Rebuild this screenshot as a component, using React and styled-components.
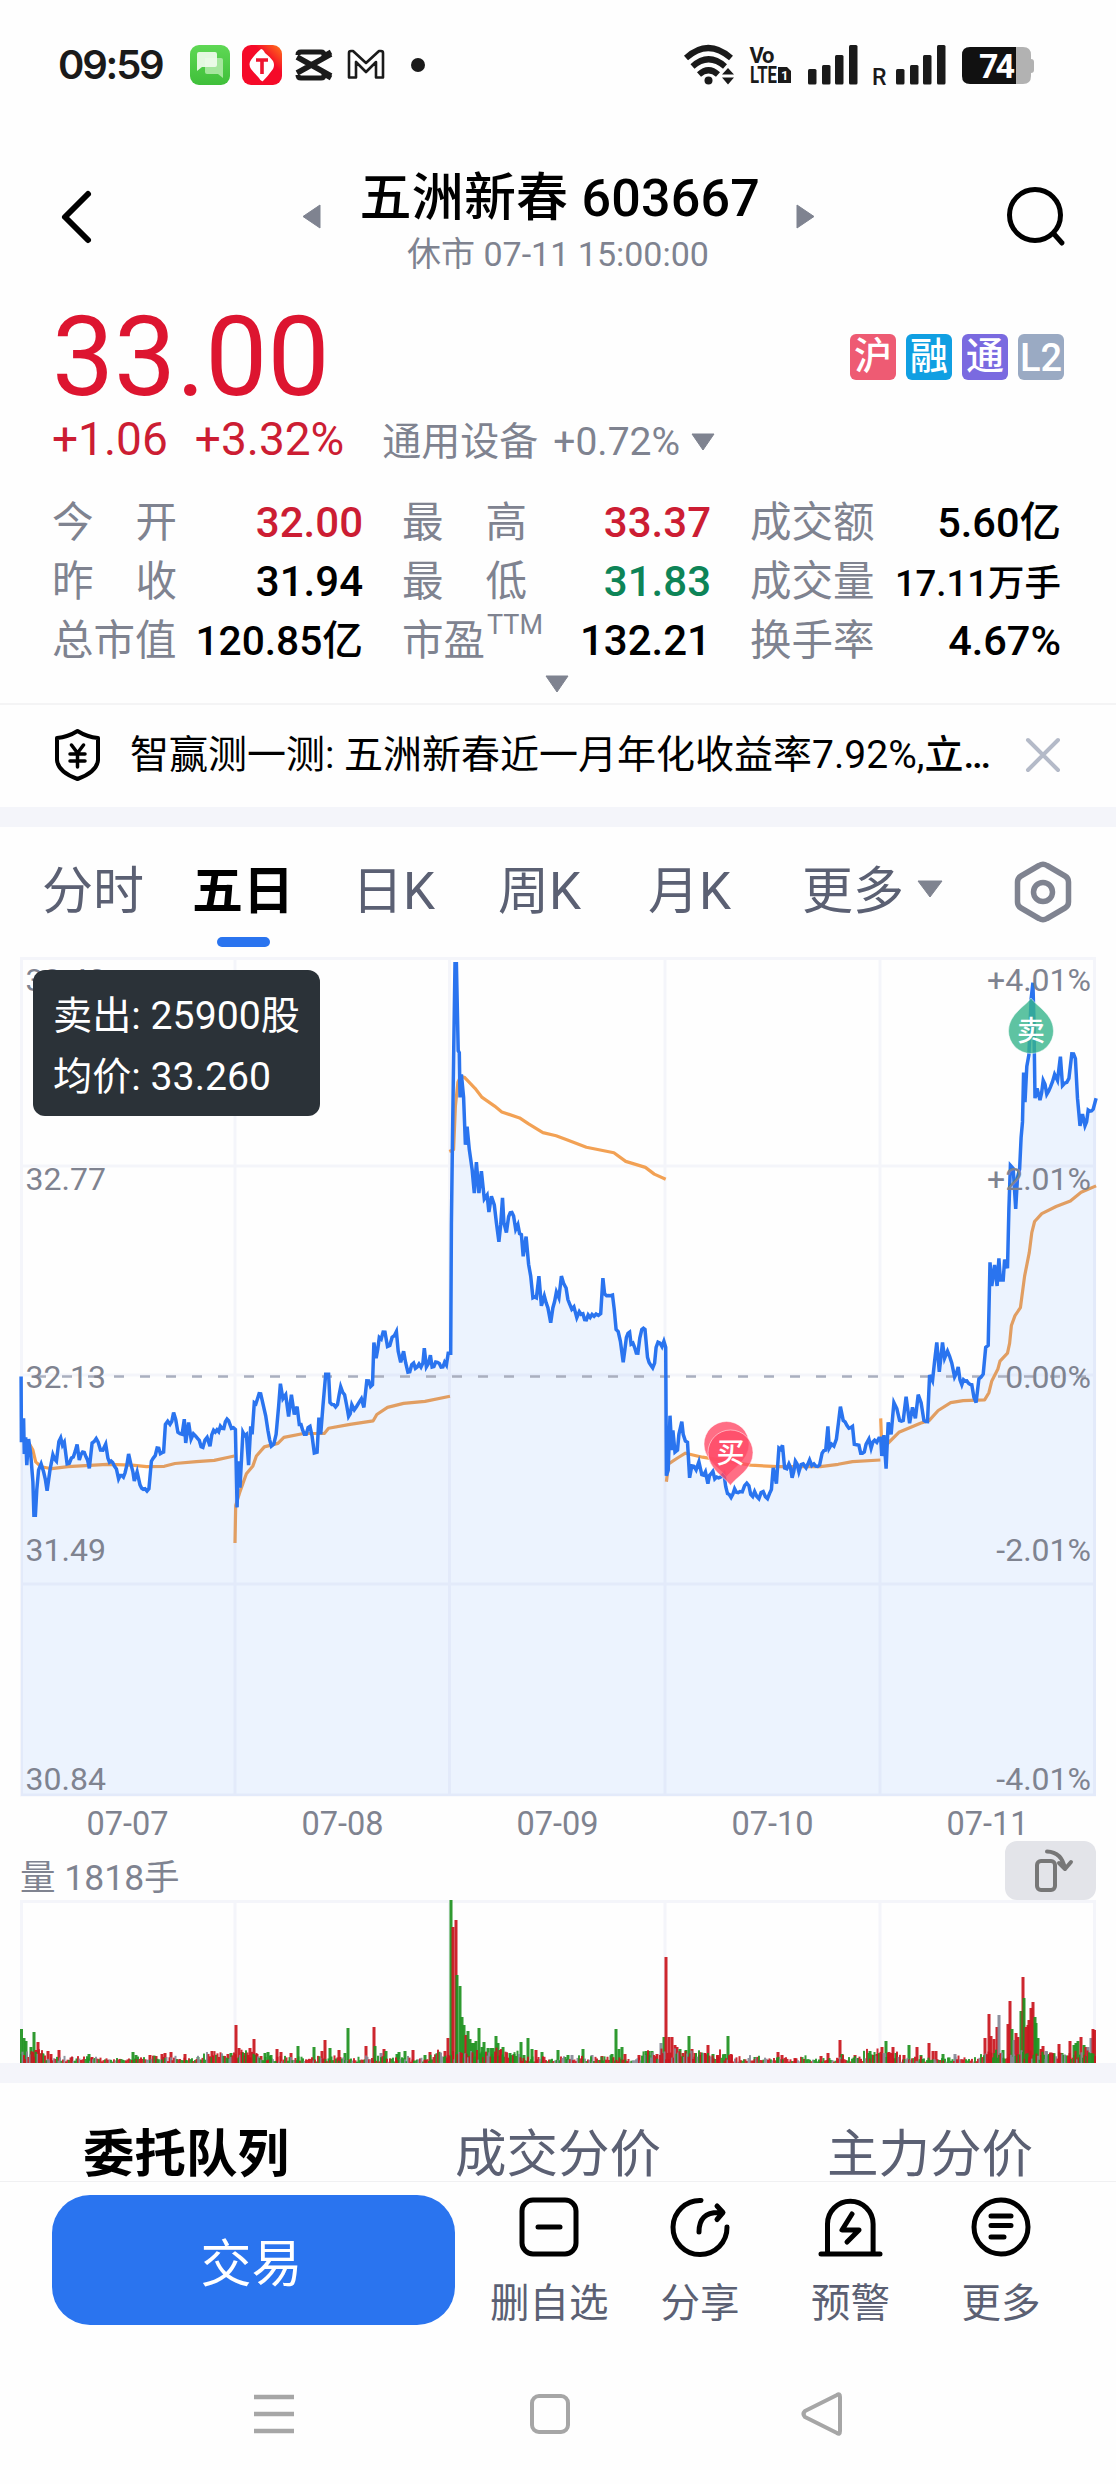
import React from "react";
import styled, { createGlobalStyle } from "styled-components";

const GlobalStyle = createGlobalStyle`
    *{
        box-sizing:border-box;
    }
    body{
        margin:0;
        background:#fefefe;
        color:#000;
        font-family:Roboto, "Noto Sans CJK SC", sans-serif;
    }
    svg{
        overflow:visible;
        flex-shrink:0;
    }
`;

const Page = styled.div`
    width:1116px;
    height:2484px;
    display:flex;
    flex-direction:column;
    overflow:hidden;
`;

const StatusBar = styled.div`
    height:130px;
    padding:0 82px 0 58px;
    display:flex;
    align-items:center;
    justify-content:space-between;
    flex-shrink:0;
    color:#1a1a1a;
`;

const StatusGroup = styled.div`
    display:flex;
    align-items:center;
`;

const Clock = styled.div`
    width:132px;
    font-family:Inter, Roboto, sans-serif;
    font-size:40px;
    font-weight:600;
    line-height:40px;
    letter-spacing:-2.2px;
    white-space:nowrap;
`;

const Header = styled.div`
    height:160px;
    padding:13px 50px 0 59px;
    display:flex;
    align-items:center;
    justify-content:space-between;
    flex-shrink:0;
`;

const Switcher = styled.div`
    margin-left:15px;
    display:flex;
    align-items:center;
    gap:40px;
`;

const TitleBlock = styled.div`
    width:397px;
    text-align:center;
    white-space:nowrap;
    margin-top:10px;
`;

const Title = styled.div`
    font-size:52px;
    font-weight:500;
    line-height:60px;
    letter-spacing:0.2px;
`;

const SubTitle = styled.div`
    font-size:34px;
    line-height:40px;
    margin-top:5px;
    color:#7f8390;
`;

const Quote = styled.div`
    height:413px;
    padding:0 52px;
    display:flex;
    flex-direction:column;
    flex-shrink:0;
`;

const PriceRow = styled.div`
    height:115px;
    display:flex;
    align-items:center;
    justify-content:space-between;
`;

const Price = styled.div`
    font-size:110.5px;
    line-height:110px;
    margin-top:19px;
    color:#dd1530;
`;

const Badges = styled.div`
    display:flex;
    gap:10px;
    margin-top:19px;
`;

const Badge = styled.div`
    width:46px;
    height:46px;
    border-radius:6px;
    background:${props => props.color};
    color:#fff;
    font-size:38px;
    font-weight:500;
    line-height:${props => (props.latin ? 49 : 45)}px;
    text-align:center;
`;

const ChangeRow = styled.div`
    height:68px;
    display:flex;
    align-items:baseline;
    font-size:46px;
    line-height:68px;
    color:#cc1d33;
    white-space:nowrap;
    span + span{
        margin-left:27px;
    }
`;

const Industry = styled.div`
    margin-left:38px;
    display:flex;
    align-items:baseline;
    gap:15px;
    font-size:39px;
    line-height:60px;
    color:#7f8390;
    svg{
        align-self:center;
        margin:0 0 1px -3px;
    }
`;

const Stats = styled.div`
    margin-top:20px;
    display:grid;
    grid-template-columns:311px 309px 311px;
    column-gap:39px;
    grid-auto-rows:59px;
`;

const Stat = styled.div`
    display:flex;
    align-items:baseline;
    justify-content:space-between;
    line-height:59px;
    white-space:nowrap;
`;

const StatLabel = styled.div`
    width:125px;
    display:flex;
    justify-content:${props => (props.spread ? "space-between" : "flex-start")};
    font-size:41.5px;
    color:#7f8390;
    sup{
        font-size:27px;
        line-height:27px;
        position:relative;
        top:-6px;
        left:2px;
    }
`;

const StatValue = styled.div`
    font-size:${props => props.size || 42}px;
    font-weight:500;
    color:${props => props.color || "#000"};
`;

const Expand = styled.div`
    display:flex;
    justify-content:center;
    padding-top:6px;
    margin-left:-2px;
`;

const Banner = styled.div`
    height:104px;
    padding:0 53px 2px 54px;
    display:flex;
    align-items:center;
    border-top:2px solid #f4f4f5;
    flex-shrink:0;
`;

const BannerText = styled.div`
    width:871px;
    margin:0 28px 0 29px;
    font-size:39px;
    line-height:56px;
    white-space:nowrap;
    b{
        font-weight:500;
    }
    i{
        font-style:normal;
        letter-spacing:-2.3px;
    }
`;

const Band = styled.div`
    height:20px;
    background:#f4f5fa;
    flex-shrink:0;
`;

const Tabs = styled.div`
    height:129px;
    padding:27px 42px 0;
    display:flex;
    align-items:flex-start;
    flex-shrink:0;
`;

const Tab = styled.div`
    margin-right:${props => props.gap}px;
    display:flex;
    flex-direction:column;
    align-items:center;
    font-size:51px;
    line-height:76px;
    font-weight:${props => (props.active ? 700 : 400)};
    color:${props => (props.active ? "#000" : "#5b6073")};
    white-space:nowrap;
    &::after{
        content:"";
        width:53px;
        height:10px;
        margin-top:7px;
        border-radius:5px;
        background:${props => (props.active ? "#2a74ef" : "transparent")};
    }
`;

const TabIcon = styled.div`
    display:flex;
    padding-top:${props => props.top}px;
    margin-right:${props => props.gap || 0}px;
`;

const ChartArea = styled.div`
    position:relative;
    height:842px;
    padding:0 20px;
    flex-shrink:0;
    svg{
        display:block;
    }
`;

const Tooltip = styled.div`
    position:absolute;
    left:33px;
    top:14px;
    width:287px;
    height:146px;
    padding:16px 20px 0;
    border-radius:12px;
    background:#2b3238;
    color:#fff;
    font-size:39.2px;
    line-height:61px;
    white-space:nowrap;
`;

const Dates = styled.div`
    height:43px;
    padding:0 20px;
    display:grid;
    grid-template-columns:repeat(5, 215px);
    flex-shrink:0;
    font-size:32.5px;
    line-height:52px;
    text-align:center;
    color:#7f8390;
`;

const VolumeHead = styled.div`
    height:59px;
    padding:0 20px;
    display:flex;
    align-items:center;
    justify-content:space-between;
    flex-shrink:0;
    font-size:35.5px;
    color:#7f8390;
    span{
        padding-top:8px;
    }
`;

const RotateButton = styled.div`
    width:91px;
    height:59px;
    border-radius:12px;
    background:#e3e4e9;
`;

const VolumeChart = styled.div`
    height:163px;
    padding:0 20px;
    flex-shrink:0;
    svg{
        display:block;
    }
`;

const BottomTabs = styled.div`
    height:99px;
    padding-top:34px;
    display:grid;
    grid-template-columns:repeat(3, 372px);
    flex-shrink:0;
    border-bottom:1px solid #f0f0f2;
`;

const BottomTab = styled.div`
    height:64px;
    text-align:center;
    font-size:51.5px;
    line-height:76px;
    font-weight:${props => (props.active ? 700 : 400)};
    color:${props => (props.active ? "#000" : "#5b6073")};
`;

const ActionBar = styled.div`
    height:156px;
    padding:13px 39px 0 52px;
    display:flex;
    align-items:flex-start;
    flex-shrink:0;
`;

const TradeButton = styled.button`
    width:403px;
    height:130px;
    margin-right:19px;
    padding:0 4px 0 0;
    border:none;
    border-radius:38px;
    background:#2a74ef;
    color:#fff;
    font-family:inherit;
    font-size:51px;
`;

const Action = styled.div`
    width:150.6px;
    padding-top:2px;
    display:flex;
    flex-direction:column;
    align-items:center;
    color:#5b6073;
    font-size:39.5px;
    line-height:56px;
    white-space:nowrap;
    svg{
        margin-bottom:19px;
    }
`;

const NavBar = styled.div`
    height:146px;
    padding:6px 273px 0 254px;
    display:flex;
    align-items:center;
    justify-content:space-between;
    svg:nth-child(2){
        margin-left:5px;
    }
`;

const GRAY = "#7f8390";

function Triangle({ dir, width, height }){
    const points = {
        left:`${width},0 0,${height / 2} ${width},${height}`,
        right:`0,0 ${width},${height / 2} 0,${height}`,
        down:`0,0 ${width},0 ${width / 2},${height}`
    };
    return(
        <svg width={width} height={height}>
            <polygon points={points[dir]} fill={GRAY} stroke={GRAY} strokeLinejoin="round"/>
        </svg>
    );
}

function AppIcons(){
    return(
        <svg width="236" height="42" viewBox="190 44 236 42">
            <defs>
                <linearGradient id="msg" x1="0" y1="0" x2="0" y2="1">
                    <stop offset="0" stopColor="#5fd855"/>
                    <stop offset="1" stopColor="#3fbf3a"/>
                </linearGradient>
                <linearGradient id="red" x1="1" y1="0" x2="0.5" y2="0.5">
                    <stop offset="0" stopColor="#ff7a1a"/>
                    <stop offset="0.7" stopColor="#f50a28"/>
                </linearGradient>
            </defs>
            <rect x="190" y="45" width="40" height="40" rx="9" fill="url(#msg)"/>
            <path d="M205 58h16q2 0 2 2v18l-5-4h-11q-2 0-2-2z" fill="#a5e69d"/>
            <path d="M199 52h16q2 0 2 2v11q0 2-2 2h-13l-5 4v-17q0-2 2-2z" fill="#effbec" opacity="0.93"/>
            <rect x="242" y="45" width="40" height="40" rx="9" fill="url(#red)"/>
            <path d="M261 49q2 0 4 4 4 3 8 8 2 4 0 8-5 7-10 12-2 1-4-3-4-4-8-9-3-5 0-9 5-7 10-11z" fill="#fff"/>
            <path d="M256 60h12M262 60v14" stroke="#ee1530" strokeWidth="3.6" fill="none"/>
            <path d="M298 55q0-3 3-3h20q3 0 3 3v1l7-4M298 75q0 3 3 3h20q3 0 3-3v-1l7 4" stroke="#1a1a1a" strokeWidth="5" fill="none"/>
            <path d="M297 57L331 76M297 73L331 54" stroke="#1a1a1a" strokeWidth="5.5"/>
            <path d="M349 77.500V53q0-2 2-2h2l13 12 13-12h2q2 0 2 2v24.500h-7V62l-10 10-10-10v15.500z" fill="none" stroke="#1a1a1a" strokeWidth="2.600" strokeLinejoin="round"/>
            <circle cx="418" cy="65" r="7" fill="#1a1a1a"/>
        </svg>
    );
}

function SystemIcons(){
    const bars = [[0, 68], [14, 64], [27, 54], [41, 44]];
    return(
        <svg width="351" height="42" viewBox="684 43 351 42" fill="#1a1a1a">
            <g fill="none" stroke="#1a1a1a" strokeWidth="6">
                <path d="M687 57Q709 37 732 57"/>
                <path d="M693.500 65.500Q709.500 51 726 65.500"/>
                <path d="M700 73.500Q709.500 65 719 73.500"/>
            </g>
            <circle cx="709.500" cy="79.500" r="4"/>
            <path d="M729 67l6 6.500h-12zM729 83.500l6-7h-12z"/>
            <text x="750.500" y="62" fontSize="22" fontWeight="700" textLength="25">Vo</text>
            <text x="751" y="81.500" fontSize="23" fontWeight="700" textLength="27" lengthAdjust="spacingAndGlyphs">LTE</text>
            <path d="M779 66h9l4 4v12h-13z"/>
            <text x="782" y="79" fontSize="13" fontWeight="700" fill="#fff">1</text>
            {[809, 897].map(left => bars.map(([dx, top]) => (
                <rect key={left + dx} x={left + dx} y={top} width="8.500" height={83.5 - top} rx="1.500"/>
            )))}
            <text x="873" y="83.500" fontSize="23" fontWeight="500">R</text>
            <path d="M1017 46h7q8 0 8 8v4q3 0 3 3v8q0 3-3 3v3q0 8-8 8h-7z" fill="#b2b2b2"/>
            <path d="M1017 46h-46q-8 0-8 8v21q0 8 8 8h46z" fill="#111"/>
            <text x="980" y="77" fontSize="34" fontWeight="700" fill="#fff" textLength="36">74</text>
        </svg>
    );
}

const stats = [
    { label:"今开", value:"32.00", color:"#cc1d33" },
    { label:"最高", value:"33.37", color:"#cc1d33" },
    { label:"成交额", value:"5.60亿", size:41.5 },
    { label:"昨收", value:"31.94" },
    { label:"最低", value:"31.83", color:"#0d8457" },
    { label:"成交量", value:"17.11万手", size:36.5 },
    { label:"总市值", value:"120.85亿", size:40.7 },
    { label:"市盈", sup:"TTM", value:"132.21" },
    { label:"换手率", value:"4.67%", size:41.5 }
];

// price ticks, x in 1/2.8 px and y in 1/2.53 px
const priceTicks = [
    [59,1104],[60,1270],[66,1210],[68,1300],[72,1258],[75,1328],[80,1262],[86,1300],[92,1370],[95,1455],[99,1455],[103,1390],[108,1340],[115,1325],[122,1345],[132,1393],[140,1340],[148,1302],[158,1318],[165,1268],[180,1270],[188,1325],[200,1310],[216,1276],[222,1315],[236,1296],[250,1336],[258,1272],[275,1270],[288,1290],[296,1275],[302,1310],[320,1330],[332,1363],[350,1348],[360,1300],[372,1345],[376,1368],[384,1345],[392,1378],[406,1388],[417,1388],[424,1318],[440,1285],[458,1295],[463,1225],[476,1225],[486,1195],[498,1245],[510,1250],[516,1212],[520,1272],[528,1220],[535,1262],[548,1255],[568,1283],[580,1258],[588,1280],[598,1240],[622,1235],[640,1216],[648,1235],[659,1238],
    [664,1435],[667,1318],[672,1385],[680,1245],[690,1250],[696,1328],[702,1230],[706,1250],[712,1170],[730,1148],[738,1180],[750,1240],[760,1280],[773,1250],[780,1180],[785,1122],[792,1160],[800,1150],[808,1205],[816,1150],[824,1200],[832,1180],[838,1225],[852,1250],[868,1230],[880,1297],[888,1295],[893,1208],[898,1250],[904,1180],[912,1098],[920,1098],[924,1170],[945,1175],[954,1130],[965,1150],[976,1205],[985,1175],[992,1188],[1005,1170],[1012,1160],[1019,1182],[1027,1115],[1043,1125],[1047,1018],[1053,1058],[1062,1005],[1078,992],[1085,1028],[1098,1005],[1110,990],[1115,1040],[1122,1068],[1130,1040],[1142,1093],[1158,1070],[1168,1080],[1184,1070],[1188,1032],[1194,1080],[1205,1050],[1210,1080],[1225,1068],[1240,1080],[1250,1075],[1255,1045],[1262,1045],
    [1264,720],[1267,500],[1270,300],[1274,60],[1278,60],[1283,280],[1286,285],[1288,398],[1292,340],[1298,398],[1303,518],[1308,472],[1314,530],[1322,580],[1328,640],[1334,562],[1341,640],[1348,585],[1356,655],[1364,645],[1369,688],[1376,648],[1384,670],[1390,715],[1397,763],[1402,720],[1407,652],[1411,715],[1418,740],[1424,700],[1438,698],[1444,732],[1450,720],[1460,745],[1465,800],[1473,750],[1480,820],[1486,850],[1492,905],[1502,905],[1509,850],[1516,925],[1524,900],[1534,930],[1542,968],[1548,930],[1558,890],
    [1565,905],[1572,850],[1585,880],[1595,920],[1607,928],[1615,955],[1622,940],[1632,945],[1637,960],[1647,948],[1669,946],[1682,945],[1688,855],[1693,895],[1715,898],[1725,985],[1737,1015],[1745,1068],[1754,1005],[1763,992],[1767,1022],[1777,1030],[1786,1045],[1797,985],[1806,985],[1813,1055],[1822,1075],[1833,1070],[1837,1030],[1859,1015],[1864,1030],
    [1866,1355],[1871,1340],[1876,1203],[1881,1290],[1884,1240],[1890,1295],[1897,1290],[1901,1250],[1909,1218],[1913,1250],[1925,1270],[1931,1360],[1937,1330],[1949,1340],[1957,1320],[1965,1352],[1975,1345],[1982,1375],[1991,1350],[2012,1360],[2027,1350],[2037,1400],[2047,1410],[2057,1388],[2072,1395],[2085,1380],[2097,1380],[2102,1402],[2113,1395],[2125,1413],[2137,1395],[2149,1413],[2160,1390],[2165,1335],[2174,1375],[2181,1285],[2191,1278],[2197,1335],[2209,1325],[2218,1360],[2227,1318],[2237,1345],[2249,1325],[2257,1335],[2267,1315],[2279,1325],[2295,1328],[2302,1298],[2312,1290],[2318,1230],[2322,1285],[2335,1280],[2342,1262],[2353,1180],[2361,1215],[2377,1235],[2387,1230],[2392,1275],[2405,1278],[2415,1298],[2425,1275],[2433,1262],[2439,1285],[2449,1265],[2461,1260],
    [2466,1260],[2469,1305],[2475,1252],[2481,1337],[2487,1220],[2495,1250],[2503,1170],[2511,1185],[2519,1215],[2529,1215],[2537,1155],[2547,1222],[2555,1182],[2563,1210],[2571,1150],[2579,1170],[2587,1215],[2597,1218],[2603,1100],[2611,1115],[2617,1065],[2623,1018],[2630,1092],[2639,1018],[2645,1058],[2653,1040],[2665,1070],[2673,1105],[2683,1080],[2693,1125],[2707,1115],[2721,1125],[2733,1170],[2741,1110],[2753,1098],[2760,1030],[2767,1025],[2772,815],[2777,875],[2785,822],[2792,875],[2797,805],[2801,860],[2809,860],[2813,808],[2821,830],[2825,680],[2829,570],[2837,578],[2844,680],[2849,600],[2855,580],[2859,500],[2863,460],[2866,335],[2870,410],[2875,320],[2881,290],[2887,150],[2892,108],[2895,200],[2898,400],[2904,375],[2912,405],[2921,355],[2931,390],[2941,372],[2953,340],[2961,355],[2969,295],[2975,368],[2987,360],[2993,350],[3001,288],[3011,300],[3017,400],[3024,470],[3031,440],[3038,470],[3047,430],[3061,428],[3069,400]
];

const averageTicks = [
    [[83,1275],[92,1290],[100,1320],[115,1332],[145,1337],[190,1332],[300,1326],[370,1328],[410,1332],[460,1331],[490,1324],[550,1319],[600,1316],[640,1308],[656,1305]],
    [[658,1525],[660,1430],[672,1395],[690,1350],[708,1330],[718,1305],[740,1282],[778,1273],[795,1258],[850,1248],[908,1248],[920,1235],[980,1225],[1045,1216],[1055,1200],[1085,1182],[1130,1172],[1190,1167],[1260,1154]],
    [[1258,535],[1270,530],[1275,420],[1282,360],[1290,345],[1300,347],[1330,375],[1350,398],[1385,420],[1405,435],[1455,450],[1480,465],[1520,487],[1557,495],[1587,505],[1642,524],[1719,538],[1752,560],[1807,575],[1832,592],[1864,605]],
    [[1866,1370],[1872,1325],[1897,1310],[1919,1298],[1967,1308],[2102,1328],[2177,1332],[2297,1332],[2347,1326],[2387,1319],[2465,1315]],
    [[2466,1210],[2468,1255],[2487,1272],[2517,1245],[2577,1222],[2602,1215],[2627,1190],[2662,1170],[2697,1165],[2757,1163],[2769,1145],[2777,1115],[2794,1085],[2800,1065],[2821,1045],[2827,1020],[2832,975],[2842,950],[2857,930],[2869,850],[2882,790],[2889,740],[2897,712],[2917,692],[2957,674],[2997,660],[3027,638],[3069,622]]
];

const toPoint = ([x, y]) => [x / 2.8 - 20, y / 2.529 - 16];
const toLine = points => points.map(p => p.map(n => n.toFixed(1)).join(",")).join(" ");

// small repeatable noise
function noise(i){
    const n = Math.sin(i * 127.1 + 11.7) * 43758.5453;
    return n - Math.floor(n);
}

// adds the minute by minute wobble between the ticks
function wobble(points){
    const out = [];
    points.forEach((point, i) => {
        out.push(point);
        const next = points[i + 1];
        if(!next) return;
        const dx = next[0] - point[0];
        const steps = Math.floor(dx / 1.6);
        for(let s = 1; s < steps; s++){
            const t = s / steps;
            out.push([
                point[0] + dx * t,
                point[1] + (next[1] - point[1]) * t + (noise(i * 9 + s) - 0.5) * 8
            ]);
        }
    });
    return out;
}

const priceLine = toLine(wobble(priceTicks.map(toPoint)));
const columns = [1.5, 215, 429.5, 645, 860, 1074.5];
const rows = [2.5, 210, 419, 628, 839];
const axis = [
    ["33.42", "+4.01%", 35],
    ["32.77", "+2.01%", 234],
    ["32.13", "0.00%", 431.5],
    ["31.49", "-2.01%", 605],
    ["30.84", "-4.01%", 834]
];

function Pin({ x, y, flip, color, label }){
    return(
        <g transform={`translate(${x} ${y})`}>
            <path
                d="M0 -33C5 -25 22.500 -17 22.500 0A22.500 22.500 0 0 1 -22.500 0C-22.500 -17 -5 -25 0 -33Z"
                transform={flip ? "rotate(180)" : undefined}
                fill={color}
                fillOpacity="0.8"
                stroke="#fff"
                strokeOpacity="0.5"
            />
            {label && <text y="10" fontSize="28" fontWeight="500" fill="#fff" textAnchor="middle">{label}</text>}
        </g>
    );
}

function PriceChart(){
    return(
        <svg width="1076" height="842">
            {rows.map(y => <line key={y} x1="0" x2="1076" y1={y} y2={y} stroke="#f4f5fa" strokeWidth="3"/>)}
            {columns.map(x => <line key={x} x1={x} x2={x} y1="1" y2="840" stroke="#f4f5fa" strokeWidth="3"/>)}
            {averageTicks.map((day, i) => (
                <polyline key={i} points={toLine(day.map(toPoint))} fill="none" stroke="#f2a154" strokeWidth="3.200" strokeLinejoin="round"/>
            ))}
            <polygon points={`1,840 ${priceLine} 1076,840`} fill="#2a80ff" fillOpacity="0.085"/>
            <line x1="16" x2="1076" y1="420.500" y2="420.500" stroke="#a9afbf" strokeWidth="2.500" strokeDasharray="10 16"/>
            <polyline points={priceLine} fill="none" stroke="#2a74ef" strokeWidth="3.500"/>
            <g fontSize="32" fill={GRAY}>
                {axis.map(([price, percent, y]) => (
                    <React.Fragment key={price}>
                        <text x="5.500" y={y}>{price}</text>
                        <text x="1071" y={y} textAnchor="end">{percent}</text>
                    </React.Fragment>
                ))}
            </g>
            <Pin x={1011} y={75} color="#36b48b" label="卖"/>
            <Pin x={706.500} y={488} flip color="#ff4a66"/>
            <Pin x={710.500} y={496.500} flip color="#ff4a66" label="买"/>
        </svg>
    );
}

// [x, height, r|g|n]
const volumeBars = "20,34,g 24,25,g 26,22,g 31,16,g 34,31,g 36,13,r 38,21,r 42,10,g 48,12,r 51,9,r 59,13,r 72,6,n 89,9,g 92,6,r 133,11,g 136,8,g 150,8,r 156,7,r 162,9,r 165,10,r 171,11,r 185,9,r 198,6,g 212,12,r 223,7,n 228,9,r 231,10,g 236,38,r 239,15,r 242,11,r 245,10,r 248,8,r 250,15,r 254,24,r 257,9,r 261,7,r 265,10,g 268,11,g 271,8,g 277,14,r 281,11,r 291,10,r 298,17,g 314,16,g 322,12,r 325,23,r 330,15,g 339,13,r 345,10,g 348,35,g 366,17,r 374,36,r 375,17,g 381,10,n 384,14,r 386,12,g 397,9,g 399,11,g 405,12,g 413,13,r 425,8,g 430,11,r 445,12,r 448,25,r 451,163,g 453,136,r 456,143,r 457,88,g 460,77,g 462,46,g 464,38,g 466,28,r 468,32,g 470,24,g 472,20,g 474,20,g 476,22,g 479,35,g 482,16,g 484,21,g 488,15,g 491,15,g 493,15,g 496,27,g 498,20,g 500,13,r 503,16,g 510,10,g 514,9,g 521,21,g 524,8,g 528,25,g 532,14,g 536,13,r 542,11,g 558,13,g 568,8,g 572,8,n 583,14,g 592,8,n 602,7,r 612,9,g 616,34,g 619,14,g 622,16,g 625,9,r 639,8,r 646,12,g 649,12,g 652,12,g 657,9,r 661,20,n 664,26,g 666,106,r 669,26,r 672,26,r 675,18,r 677,16,r 680,14,g 683,10,r 686,13,g 689,27,g 692,14,r 695,10,r 700,8,r 705,10,r 708,18,r 713,9,g 718,8,r 725,9,g 728,27,g 731,9,r 755,6,g 778,11,r 782,8,r 795,5,r 821,7,r 828,10,r 840,23,r 842,9,g 855,8,r 870,12,g 874,8,g 877,9,r 882,16,r 886,22,g 889,11,r 893,16,r 896,10,g 904,8,r 909,18,g 917,16,r 921,8,g 929,20,r 933,12,r 936,12,r 943,9,g 955,9,n 985,25,r 989,49,r 991,27,r 994,24,r 997,36,r 999,48,n 1003,13,g 1008,39,r 1010,62,r 1012,34,g 1014,23,n 1016,30,r 1018,26,r 1021,52,g 1023,86,r 1024,65,g 1026,36,r 1028,38,r 1029,43,r 1031,55,r 1033,61,r 1035,46,g 1036,40,g 1038,25,g 1041,14,r 1043,17,r 1046,12,n 1049,9,g 1053,10,r 1059,19,r 1062,10,g 1070,22,r 1074,18,g 1076,20,g 1078,22,g 1081,26,r 1084,18,g 1086,16,r 1088,16,n 1091,25,n 1093,34,r 1095,33,r"
    .split(" ")
    .map(bar => bar.split(","));

const volumeColors = { r:"#c9151e", g:"#1f9220", n:"#858996" };

// busy minutes that follow each opening and the close of the week
function floorHeight(x){
    const busy = x < 45 || (x > 200 && x < 260) || (x > 430 && x < 520) || (x > 640 && x < 720) || (x > 862 && x < 900) || x > 982;
    return busy ? 8 : 3;
}

function Volume(){
    const quiet = Array.from({ length:717 }, (_, i) => 1.5 * i);
    return(
        <svg width="1076" height="163">
            <line x1="0" x2="1076" y1="1.500" y2="1.500" stroke="#f4f5fa" strokeWidth="3"/>
            {columns.map(x => <line key={x} x1={x} x2={x} y1="0" y2="163" stroke="#f4f5fa" strokeWidth="3"/>)}
            {volumeBars.map(([x, h, c]) => (
                <rect key={x} x={Math.min(1073, Math.max(0, x - 21.5))} y={163 - h} width="3" height={h} fill={volumeColors[c]} fillOpacity="0.93"/>
            ))}
            {quiet.map((x, i) => {
                const h = floorHeight(x + 20) * (0.4 + noise(i)) + noise(i + 900) ** 3 * 5;
                const pick = noise(i + 3000);
                const color = pick < 0.42 ? "r" : pick < 0.82 ? "g" : "n";
                return <rect key={x} x={x} y={163 - h} width="2" height={h} fill={volumeColors[color]} fillOpacity="0.9"/>;
            })}
        </svg>
    );
}

const actions = [
    {
        label:"删自选",
        icon:<><rect x="5" y="3" width="54" height="54" rx="11"/><path d="M21 30h22"/></>
    },
    {
        label:"分享",
        icon:<><path d="M33 3.500A27 27 0 1 0 59 30"/><path d="M31 35C31 22 37 15 52 15.500M49 9l6 6.500-6 7"/></>
    },
    {
        label:"预警",
        icon:<><path d="M9.500 57V27a22.800 22.800 0 0 1 45.600 0V57M3 57h59"/><path d="M34 17L24 33h17L29 45"/></>
    },
    {
        label:"更多",
        icon:<><circle cx="32" cy="30" r="27"/><path d="M22 19h20M22 28.500h20M22 40h13"/></>
    }
];

function App(){
    return(
        <Page>
            <GlobalStyle/>
            <StatusBar>
                <StatusGroup>
                    <Clock>09:59</Clock>
                    <AppIcons/>
                </StatusGroup>
                <SystemIcons/>
            </StatusBar>

            <Header>
                <svg width="36" height="56" fill="none" stroke="#000" strokeWidth="6" strokeLinecap="round" strokeLinejoin="round">
                    <path d="M29 5L6 28l23 23"/>
                </svg>
                <Switcher>
                    <Triangle dir="left" width={17} height={23}/>
                    <TitleBlock>
                        <Title>五洲新春 603667</Title>
                        <SubTitle>休市 07-11 15:00:00</SubTitle>
                    </TitleBlock>
                    <Triangle dir="right" width={17} height={23}/>
                </Switcher>
                <svg width="60" height="60" fill="none" stroke="#000" strokeWidth="5" strokeLinecap="round">
                    <circle cx="29" cy="28" r="25.500"/>
                    <path d="M48 47l8 9"/>
                </svg>
            </Header>

            <Quote>
                <PriceRow>
                    <Price>33.00</Price>
                    <Badges>
                        <Badge color="#ee5b73">沪</Badge>
                        <Badge color="#109fe2">融</Badge>
                        <Badge color="#7a6ae0">通</Badge>
                        <Badge color="#9aaac3" latin={1}>L2</Badge>
                    </Badges>
                </PriceRow>
                <ChangeRow>
                    <span>+1.06</span>
                    <span>+3.32%</span>
                    <Industry>
                        <div>通用设备</div>
                        <div>+0.72%</div>
                        <Triangle dir="down" width={22} height={16}/>
                    </Industry>
                </ChangeRow>
                <Stats>
                    {stats.map(stat => (
                        <Stat key={stat.label}>
                            <StatLabel spread={stat.label.length === 2 && !stat.sup ? 1 : 0}>
                                {stat.sup ? <div>{stat.label}<sup>{stat.sup}</sup></div> : stat.label.split("").map(char => <span key={char}>{char}</span>)}
                            </StatLabel>
                            <StatValue color={stat.color} size={stat.size}>{stat.value}</StatValue>
                        </Stat>
                    ))}
                </Stats>
                <Expand><Triangle dir="down" width={22} height={16}/></Expand>
            </Quote>

            <Banner>
                <svg width="47" height="54" fill="none" stroke="#000" strokeWidth="4" strokeLinecap="round" strokeLinejoin="round">
                    <path d="M23.500 3Q33 9 44 10V32Q43 44 23.500 51Q4 44 3 32V10Q14 9 23.500 3Z"/>
                    <path d="M17.500 17l6 8 6-8M23.500 25v14M16 26h15M16 33h15" strokeWidth="3.500"/>
                </svg>
                <BannerText>智赢测一测: 五洲新春近一月年化收益率7.92%,<b>立<i>...</i></b></BannerText>
                <svg width="38" height="38" stroke="#b4bac8" strokeWidth="4" strokeLinecap="round">
                    <path d="M3 4l30 30M33 4L3 34"/>
                </svg>
            </Banner>
            <Band/>

            <Tabs>
                <Tab gap={48}>分时</Tab>
                <Tab gap={58} active={1}>五日</Tab>
                <Tab gap={63}>日K</Tab>
                <Tab gap={67}>周K</Tab>
                <Tab gap={71}>月K</Tab>
                <Tab gap={14}>更多</Tab>
                <TabIcon top={27} gap={71}><Triangle dir="down" width={24} height={16}/></TabIcon>
                <TabIcon top={5}>
                    <svg width="60" height="66" fill="none" stroke={GRAY} strokeWidth="5.500" strokeLinejoin="round">
                        <path d="M26 6.500Q30 4 34 6.500L52 17Q55.500 19 55.500 23V43Q55.500 47 52 49L34 59.500Q30 62 26 59.500L8 49Q4.500 47 4.500 43V23Q4.500 19 8 17Z"/>
                        <circle cx="30" cy="33" r="9.500"/>
                    </svg>
                </TabIcon>
            </Tabs>

            <ChartArea>
                <PriceChart/>
                <Tooltip>
                    <div>卖出: 25900股</div>
                    <div>均价: 33.260</div>
                </Tooltip>
            </ChartArea>
            <Dates>
                {["07-07", "07-08", "07-09", "07-10", "07-11"].map(date => <div key={date}>{date}</div>)}
            </Dates>
            <VolumeHead>
                <span>量 1818手</span>
                <RotateButton>
                    <svg width="91" height="59" fill="none" stroke="#777" strokeWidth="4" strokeLinecap="round" strokeLinejoin="round">
                        <rect x="32" y="20" width="18" height="29" rx="4"/>
                        <path d="M42 10.500Q57 11 60 28M54 22l6 6 6-7"/>
                    </svg>
                </RotateButton>
            </VolumeHead>
            <VolumeChart><Volume/></VolumeChart>
            <Band/>

            <BottomTabs>
                <BottomTab active={1}>委托队列</BottomTab>
                <BottomTab>成交分价</BottomTab>
                <BottomTab>主力分价</BottomTab>
            </BottomTabs>
            <ActionBar>
                <TradeButton>交易</TradeButton>
                {actions.map(action => (
                    <Action key={action.label}>
                        <svg width="64" height="60" fill="none" stroke="#000" strokeWidth="5" strokeLinecap="round" strokeLinejoin="round">
                            {action.icon}
                        </svg>
                        {action.label}
                    </Action>
                ))}
            </ActionBar>

            <NavBar>
                <svg width="40" height="40" stroke="#a6a6a6" strokeWidth="4.500">
                    <path d="M0 3h40M0 20h40M0 37h40"/>
                </svg>
                <svg width="40" height="40" fill="none" stroke="#a6a6a6" strokeWidth="4">
                    <rect x="2" y="2" width="36" height="36" rx="7"/>
                </svg>
                <svg width="42" height="46" fill="none" stroke="#a6a6a6" strokeWidth="4" strokeLinejoin="round">
                    <path d="M36 4Q39 2 39 6V40Q39 44 36 42L4 26Q1 23 4 20Z"/>
                </svg>
            </NavBar>
        </Page>
    );
}

export default App;
